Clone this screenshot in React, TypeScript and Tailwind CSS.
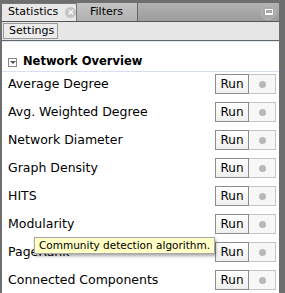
import React from "react";

const rows = [
  "Average Degree",
  "Avg. Weighted Degree",
  "Network Diameter",
  "Graph Density",
  "HITS",
  "Modularity",
  "PageRank",
  "Connected Components",
];

const RunCell = () => (
  <div className="flex h-[20px] mr-[3px]">
    <div className="w-[34px] h-full border border-[#8c8c8c] bg-gradient-to-b from-white to-[#efefef] flex items-center justify-center text-[12px] text-black">
      Run
    </div>
    <div className="w-[27px] h-full border border-l-0 border-[#c4c4c4] bg-[#f7f7f7] flex items-center justify-center">
      <div className="w-[7px] h-[7px] rounded-full bg-[#b8b8b8]" />
    </div>
  </div>
);

const App = () => {
  return (
    <div
      className="w-[285px] h-[293px] bg-[#6e6e6e] pl-[2px] pr-[6px] pt-[3px] overflow-hidden relative"
      style={{ fontFamily: '"DejaVu Sans", sans-serif' }}
    >
      <div className="min-h-full bg-white flex flex-col">
        <div className="h-[19px] shrink-0 flex bg-gradient-to-b from-[#b2b2b2] to-[#9c9c9c] border-b border-[#555]">
          <div className="w-[75px] bg-[#e8e8e8] border-t border-[#9cc0e8] flex items-center pl-[6px] text-[11px] text-black border-r border-[#777]">
            Statistics
            <span className="ml-[7px] w-[11px] h-[11px] rounded-full bg-[#c4c4c4] text-white text-[9px] leading-none flex items-center justify-center font-bold">
              ×
            </span>
          </div>
          <div className="w-[61px] bg-gradient-to-b from-[#c4c4c4] to-[#b0b0b0] border-r border-[#666] flex items-center pl-[13px] text-[11px] text-black">
            Filters
          </div>
          <div className="flex-1 flex items-center justify-end pr-[3px]">
            <div className="w-[15px] h-[15px] rounded-full bg-[#a9a9a9] border border-[#b8b8b8] flex items-center justify-center">
              <div className="w-[8px] h-[6px] border border-white border-b-[2px]" />
            </div>
          </div>
        </div>
        <div className="h-[19px] shrink-0 bg-[#e6e6e6] border-b border-[#666] flex items-center pl-[1px]">
          <div className="h-[16px] w-[55px] pl-[5px] border border-[#9a9a9a] bg-[#ececec] flex items-center text-[11px] text-black">
            Settings
          </div>
        </div>
        <div className="h-[1px] shrink-0 bg-[#dfe8f6]" />
        <div className="h-[10px] shrink-0" />
        <div className="h-[20px] shrink-0 border-b border-[#d6e0f2] flex items-center pl-[6px] pt-[1px]">
          <div className="w-[9px] h-[9px] border border-[#888] bg-white flex items-center justify-center mr-[6px]">
            <div className="w-0 h-0 border-l-[3px] border-r-[3px] border-t-[3px] border-l-transparent border-r-transparent border-t-[#555]" />
          </div>
          <span className="text-[11.5px] font-bold text-black">Network Overview</span>
        </div>
        <div className="flex flex-col shrink-0">
          {rows.map((r) => (
            <div key={r} className="h-[28px] shrink-0 pt-[2px] flex items-start justify-between pl-[6px]">
              <span className="h-[20px] flex items-center text-[12.5px] text-black">{r}</span>
              <RunCell />
            </div>
          ))}
        </div>
      </div>
      <div className="absolute left-[34px] top-[237px] h-[17px] px-[4px] bg-[#ffffc6] border border-[#a8a8a8] shadow-[1px_2px_3px_rgba(0,0,0,0.35)] flex items-center text-[10.5px] text-black whitespace-nowrap">
        Community detection algorithm.
      </div>
    </div>
  );
};

export default App;
